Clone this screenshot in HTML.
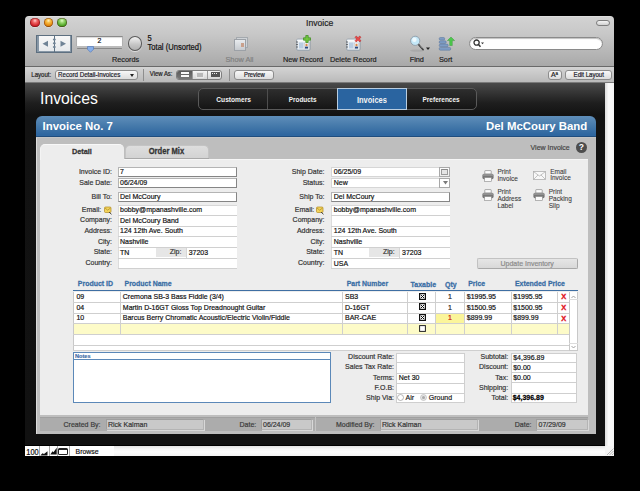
<!DOCTYPE html>
<html><head><meta charset="utf-8">
<style>
*{margin:0;padding:0;box-sizing:border-box}
html,body{width:640px;height:491px;background:#000;overflow:hidden;font-family:"Liberation Sans",sans-serif;}
.a{position:absolute}
.t{position:absolute;white-space:nowrap;line-height:1;-webkit-text-stroke:0.18px currentColor}
.t[style*="bold"]{-webkit-text-stroke:0.25px currentColor}
.t[style*="#fff"]{-webkit-text-stroke:0}
.t{transform:scaleY(1.1);transform-origin:0 85%}
#tb{position:absolute;left:25.4px;top:16px;width:588.8px;height:51px;background:linear-gradient(#e4e4e4 0,#d2d2d2 1.5px,#c8c8c8 35%,#a9a9a9);border-bottom:1px solid #6a6a6a;border-radius:4px 4px 0 0}
#lb{position:absolute;left:25.4px;top:67px;width:588.8px;height:16px;background:linear-gradient(#d4d4d4,#bababa);border-bottom:1px solid #7a7a7a}
#content{position:absolute;left:25.4px;top:83px;width:579.6px;height:362px;background:linear-gradient(#4a4a4a 0px,#1e1e1e 20px,#121212 32px,#111)}
#vscroll{position:absolute;left:605px;top:83px;width:9.3px;height:363px;background:linear-gradient(90deg,#dcdcdc,#fafafa 40%,#f4f4f4)}
#status{position:absolute;left:26px;top:445px;width:588px;height:11px;background:linear-gradient(90deg,#fff 0,#fff 400px,#f6f6f6)}
.tl{position:absolute;width:9.5px;height:9.5px;border-radius:50%;top:17.8px;box-shadow:inset 0 0 0 0.7px rgba(60,0,0,.45),0 0.5px 0.5px rgba(255,255,255,.6)}
.lbl{font-size:7.3px;color:#222}
</style></head><body>
<div id="tb"></div>
<!-- traffic lights -->
<div class="tl" style="left:30.3px;background:radial-gradient(circle at 50% 30%,#ffd0d0 0,#f06a6a 25%,#d2252c 60%,#8e1015 100%)"></div>
<div class="tl" style="left:43.8px;background:radial-gradient(circle at 50% 30%,#fff0c0 0,#f8c04a 25%,#e58a10 60%,#9a5a05 100%)"></div>
<div class="tl" style="left:57px;background:radial-gradient(circle at 50% 30%,#e0ffc8 0,#9ad870 25%,#52a82a 60%,#2a6a0c 100%)"></div>
<div class="t" style="left:306px;top:19px;font-size:8.6px;color:#222">Invoice</div>
<div class="a" style="left:596px;top:19.5px;width:14px;height:6.5px;border-radius:4px;border:1px solid #7d7d7d;background:linear-gradient(#f4f4f4,#d0d0d0)"></div>


<!-- book icon -->
<div class="a" style="left:36px;top:35px;width:36px;height:17.5px;background:#8797a6;border:0.8px solid #5d6f80"></div>
<div class="a" style="left:38.5px;top:36.2px;width:15px;height:15px;background:linear-gradient(#f8f8f8,#e6e9ec)"></div>
<div class="a" style="left:55px;top:36.2px;width:14.5px;height:15px;background:linear-gradient(#f8f8f8,#e6e9ec)"></div>
<div class="a" style="left:53.5px;top:35px;width:1.5px;height:17.5px;background:#5f7283"></div>
<svg class="a" style="left:36px;top:35px" width="36" height="17" viewBox="0 0 36 17">
<path d="M6.5 8.8 L12 5.8 L12 11.8 Z" fill="#6f8396"/>
<path d="M30 8.8 L24.5 5.8 L24.5 11.8 Z" fill="#6f8396"/>
<ellipse cx="18.3" cy="4.6" rx="1.5" ry="1.1" fill="#6f8396"/>
<ellipse cx="18.3" cy="8.3" rx="1.5" ry="1.1" fill="#6f8396"/>
<ellipse cx="18.3" cy="12" rx="1.5" ry="1.1" fill="#6f8396"/>
</svg>
<!-- record field -->
<div class="a" style="left:76px;top:35.5px;width:46.5px;height:10.5px;background:#fff;border-top:1px solid #8a8a8a;border-left:1px solid #b0b0b0;border-right:1px solid #b0b0b0;box-shadow:inset 0 1px 1px rgba(0,0,0,.15)"></div>
<div class="t" style="left:97.6px;top:38.1px;font-size:6.9px;color:#111">2</div>
<div class="a" style="left:76.5px;top:47.6px;width:45.5px;height:1.6px;background:linear-gradient(#6a6a6a,#a8a8a8);border-radius:1px"></div>
<svg class="a" style="left:86.8px;top:46.3px" width="7" height="7" viewBox="0 0 7 7"><path d="M0.5 0.5 H6.5 V3.3 L3.5 6.3 L0.5 3.3 Z" fill="#86aee8" stroke="#5a7db8" stroke-width="0.7"/></svg>
<div class="t lbl" style="left:112px;top:55.5px">Records</div>
<!-- pie -->
<div class="a" style="left:127.6px;top:36px;width:14.5px;height:14.7px;border-radius:50%;background:linear-gradient(#f2f2f2,#c4c4c4 60%,#b0b0b0);border:1px solid #5a5a5a;box-shadow:0 1px 1px rgba(255,255,255,.6)"></div>
<div class="t" style="left:147.5px;top:35.3px;font-size:7.5px;color:#111">5</div>
<div class="t" style="left:147.5px;top:43.6px;font-size:7.6px;color:#111">Total (Unsorted)</div>
<!-- show all icon -->
<div class="a" style="left:236px;top:36.5px;width:12px;height:11px;background:#cfd3d7;border:1px solid #a4a9ae"></div>
<div class="a" style="left:234px;top:38.5px;width:12px;height:12px;background:linear-gradient(#e8ebee,#c6cacf);border:1px solid #9ca1a7"></div>
<div class="a" style="left:240.5px;top:42.5px;width:3px;height:4px;background:#c9a08c"></div>
<div class="t lbl" style="left:225.5px;top:55.5px;color:#808080">Show All</div>
<!-- new record icon -->
<svg class="a" style="left:295.5px;top:38px" width="15" height="13" viewBox="0 0 15 13">
<rect x="0.8" y="1.2" width="13.2" height="11" rx="1" fill="#e9eef3" stroke="#8090a0" stroke-width="0.8"/>
<rect x="1.2" y="1.6" width="12.4" height="2" fill="#f8fafc"/>
<path d="M0 4 H2 M0 6.5 H2 M0 9 H2" stroke="#555" stroke-width="0.8"/>
<rect x="3" y="4.5" width="4.5" height="6" fill="#b9cde3"/>
<rect x="8.5" y="5" width="4" height="5.5" fill="#fff" stroke="#aab" stroke-width="0.4"/>
<circle cx="10.5" cy="7" r="1.2" fill="#d98c50"/>
<rect x="9" y="8.6" width="3" height="1.9" fill="#2a4a80"/>
</svg>
<svg class="a" style="left:303px;top:35px" width="8" height="8" viewBox="0 0 8 8"><path d="M2.8 0.5 H5.2 V2.8 H7.5 V5.2 H5.2 V7.5 H2.8 V5.2 H0.5 V2.8 H2.8 Z" fill="#72c640" stroke="#3b8a1e" stroke-width="0.7"/></svg>
<div class="t lbl" style="left:283px;top:55.5px">New Record</div>
<!-- delete record icon -->
<svg class="a" style="left:345.5px;top:38px" width="15" height="13" viewBox="0 0 15 13">
<rect x="0.8" y="1.2" width="13.2" height="11" rx="1" fill="#e9eef3" stroke="#8090a0" stroke-width="0.8"/>
<rect x="1.2" y="1.6" width="12.4" height="2" fill="#f8fafc"/>
<path d="M0 4 H2 M0 6.5 H2 M0 9 H2" stroke="#555" stroke-width="0.8"/>
<rect x="3" y="4.5" width="4.5" height="6" fill="#b9cde3"/>
<rect x="8.5" y="5" width="4" height="5.5" fill="#fff" stroke="#aab" stroke-width="0.4"/>
<circle cx="10.5" cy="7" r="1.2" fill="#d98c50"/>
<rect x="9" y="8.6" width="3" height="1.9" fill="#2a4a80"/>
</svg>
<svg class="a" style="left:353.5px;top:35px" width="8" height="8" viewBox="0 0 8 8"><path d="M1 2.3 L2.3 1 L4 2.7 L5.7 1 L7 2.3 L5.3 4 L7 5.7 L5.7 7 L4 5.3 L2.3 7 L1 5.7 L2.7 4 Z" fill="#e84a4a" stroke="#b02020" stroke-width="0.5"/></svg>
<div class="t lbl" style="left:330px;top:55.5px">Delete Record</div>
<!-- find -->
<svg class="a" style="left:409px;top:35px" width="22" height="18" viewBox="0 0 22 18">
<ellipse cx="8" cy="15.6" rx="7" ry="1.2" fill="rgba(0,0,0,.08)"/>
<line x1="9.8" y1="9.8" x2="14" y2="14.5" stroke="#3a3a3a" stroke-width="1.7" stroke-linecap="round"/>
<line x1="10.8" y1="10.2" x2="13.5" y2="13.3" stroke="#ddd" stroke-width="0.5"/>
<circle cx="6.2" cy="5.8" r="4.6" fill="#c4e8f8" stroke="#8e9ca8" stroke-width="0.9"/>
<circle cx="5.4" cy="4.8" r="2.2" fill="#eef9fe"/>
<path d="M17 12.5 H21 L19 15 Z" fill="#222"/>
</svg>
<div class="t lbl" style="left:409.7px;top:55.5px">Find</div>
<!-- sort -->
<svg class="a" style="left:438px;top:36px" width="18" height="16" viewBox="0 0 18 16">
<rect x="1.2" y="1.5" width="5.5" height="2.6" rx="1.2" fill="#7e9cc4" stroke="#56739a" stroke-width="0.5"/>
<rect x="1.2" y="4.8" width="7" height="2.6" rx="1.2" fill="#7e9cc4" stroke="#56739a" stroke-width="0.5"/>
<rect x="1.2" y="8.1" width="9" height="2.6" rx="1.2" fill="#7e9cc4" stroke="#56739a" stroke-width="0.5"/>
<rect x="1.2" y="11.4" width="11.5" height="2.8" rx="1.2" fill="#7e9cc4" stroke="#56739a" stroke-width="0.5"/>
<path d="M13 1 L16.6 4.6 H14.3 V9.5 H11.7 V4.6 H9.4 Z" fill="#4cc84c" stroke="#2f8f2f" stroke-width="0.4"/>
</svg>
<div class="t lbl" style="left:439px;top:55.5px">Sort</div>
<!-- search -->
<div class="a" style="left:468.5px;top:36.5px;width:134.5px;height:13.5px;border-radius:7px;background:#fff;border:1px solid #8a8a8a;box-shadow:inset 0 1px 1px rgba(0,0,0,.25)"></div>
<svg class="a" style="left:473px;top:39px" width="12" height="9" viewBox="0 0 12 9"><circle cx="3.6" cy="3.6" r="2.6" fill="none" stroke="#333" stroke-width="1.3"/><line x1="5.5" y1="5.5" x2="7.5" y2="7.8" stroke="#333" stroke-width="1.5"/><path d="M8 3.5 H11 L9.5 5.2 Z" fill="#333"/></svg>

<div id="lb"></div>

<div class="t lbl" style="left:31.3px;top:72.4px;font-size:6.05px">Layout:</div>
<div class="a" style="left:54.5px;top:69.5px;width:83px;height:10.5px;border-radius:3px;border:1px solid #8c8c8c;background:linear-gradient(#f8f8f8,#dcdcdc)"></div>
<div class="t lbl" style="left:58px;top:72.3px;font-size:6.2px;color:#1a1a2a">Record Detail-Invoices</div>
<svg class="a" style="left:130px;top:73.5px" width="4" height="3" viewBox="0 0 4 3"><path d="M0 0 H4 L2 3Z" fill="#222"/></svg>
<div class="a" style="left:143px;top:68.5px;width:1px;height:12px;background:#8e8e8e"></div>
<div class="t lbl" style="left:149.8px;top:72.4px;font-size:5.95px">View As:</div>
<div class="a" style="left:175.5px;top:69.7px;width:46.5px;height:10px;border-radius:3px;border:1px solid #7e7e7e;background:linear-gradient(#f6f6f6,#d6d6d6);overflow:hidden">
  <div class="a" style="left:0;top:0;width:15px;height:8px;background:linear-gradient(#5a5a5a,#7a7a7a)"></div>
  <div class="a" style="left:4px;top:1.4px;width:8px;height:2.2px;background:#fafafa"></div>
  <div class="a" style="left:4px;top:4.6px;width:8px;height:2.2px;background:#fafafa"></div>
  <div class="a" style="left:15px;top:0;width:0.8px;height:8px;background:#9a9a9a"></div>
  <div class="a" style="left:19px;top:1.3px;width:8.5px;height:6px;background:#b8b8b8;border:0.6px solid #e8e8e8"></div>
  <div class="a" style="left:30.5px;top:0;width:0.8px;height:8px;background:#9a9a9a"></div>
  <div class="a" style="left:34.5px;top:1.3px;width:9px;height:5.5px;background:repeating-linear-gradient(90deg,transparent 0 0.8px,#555 0.8px 2.2px),repeating-linear-gradient(transparent 0 0.9px,#555 0.9px 2.6px),#f0f0f0;border:0.8px solid #555"></div>
</div>
<div class="a" style="left:228.6px;top:68.5px;width:1px;height:12px;background:#8e8e8e"></div>
<div class="a" style="left:234px;top:69.5px;width:40px;height:10.5px;border-radius:3px;border:1px solid #8c8c8c;background:linear-gradient(#f8f8f8,#dcdcdc)"></div>
<div class="t lbl" style="left:244px;top:72.8px;font-size:5.85px;color:#1a1a2a">Preview</div>
<div class="a" style="left:548px;top:69.5px;width:13.5px;height:10px;border-radius:3px;border:1px solid #8c8c8c;background:linear-gradient(#f8f8f8,#dcdcdc)"></div>
<div class="t" style="left:551px;top:71.3px;font-size:7px;color:#222;letter-spacing:-0.3px">A<span style="font-size:4.5px;vertical-align:1.5px">a</span></div>
<div class="a" style="left:565px;top:69.5px;width:47px;height:10.5px;border-radius:3px;border:1px solid #8c8c8c;background:linear-gradient(#f8f8f8,#dcdcdc)"></div>
<div class="t lbl" style="left:573.6px;top:72.3px;font-size:6.05px;color:#1a1a2a">Edit Layout</div>

<div id="content"></div>
<div id="vscroll"></div>

<div class="t" style="left:40.4px;top:91.3px;font-size:16.8px;color:#fff;-webkit-text-stroke:0;transform:scaleX(0.94);transform-origin:0 0">Invoices</div>
<div class="a" style="left:198px;top:88px;width:278.5px;height:22px;border-radius:5px;border:1px solid #5a5a5a;background:linear-gradient(#2e2e2e,#151515)"></div>
<div class="a" style="left:267px;top:89px;width:1px;height:20px;background:#4e4e4e"></div>
<div class="a" style="left:337px;top:88px;width:69.5px;height:22px;background:#2a64a0;border:1px solid #b9cde0"></div>
<div class="t" style="left:216.3px;top:96.8px;font-size:6.65px;font-weight:bold;color:#f4f4f4;-webkit-text-stroke:0">Customers</div>
<div class="t" style="left:288.8px;top:96.8px;font-size:6.4px;font-weight:bold;color:#f4f4f4;-webkit-text-stroke:0">Products</div>
<div class="t" style="left:356.9px;top:96.8px;font-size:7.5px;font-weight:bold;color:#f4f4f4;-webkit-text-stroke:0">Invoices</div>
<div class="t" style="left:422.5px;top:96.8px;font-size:6.5px;font-weight:bold;color:#f4f4f4;-webkit-text-stroke:0">Preferences</div>
<!-- blue header -->
<div class="a" style="left:35.75px;top:116px;width:560.5px;height:21px;border-radius:6px 6px 0 0;background:linear-gradient(#5f8eba,#4579aa 50%,#2f67a0 92%);border-bottom:1px solid #1f4d7e"></div>
<div class="t" style="left:42.6px;top:121.2px;font-size:11.4px;font-weight:bold;color:#fff;transform:none">Invoice No. 7</div>
<div class="t" style="left:486px;top:121.2px;font-size:11.4px;font-weight:bold;color:#fff;transform:none">Del McCoury Band</div>
<!-- gray panel -->
<div class="a" style="left:35.5px;top:137px;width:560.5px;height:297px;background:#bebebe;border-left:1px solid #dcdcdc;border-top:1px solid #c6c6c6"></div>
<div class="a" style="left:124.60px;top:144.70px;width:84.40px;height:14.30px;background:linear-gradient(#dedede,#d2d2d2);border:1px solid #c4c4c4;border-bottom:none;border-radius:5px 5px 0 0"></div>
<div class="a" style="left:40.00px;top:158.50px;width:548.00px;height:256.00px;background:#ededed;border-top:1px solid #f6f6f6"></div>
<div class="a" style="left:124.60px;top:158.00px;width:84.40px;height:1.00px;background:#a9a9a9"></div>
<div class="a" style="left:40.00px;top:144.00px;width:84.00px;height:15.50px;background:#ededed;border-radius:5px 5px 0 0;border-top:1px solid #f8f8f8;border-left:1px solid #f4f4f4"></div>
<div class="t" style="left:71.90px;top:147.68px;font-size:7.35px;color:#333;font-weight:bold;">Detail</div>
<div class="t" style="left:148.70px;top:147.77px;font-size:7.6px;color:#333;font-weight:bold;">Order Mix</div>
<div class="t" style="right:70.25px;top:143.82px;font-size:7.0px;color:#444;">View Invoice</div>
<div class="a" style="left:575.6px;top:142px;width:11.3px;height:11.3px;border-radius:50%;background:#4d4d4d"></div>
<div class="t" style="left:531.30px;width:100px;text-align:center;top:143.40px;font-size:8.5px;color:#fff;font-weight:bold;">?</div>
<div class="t" style="right:528.00px;top:167.57px;font-size:7.0px;color:#333;">Invoice ID:</div>
<div class="t" style="right:528.00px;top:179.07px;font-size:7.0px;color:#333;">Sale Date:</div>
<div class="t" style="right:528.00px;top:193.37px;font-size:7.0px;color:#333;">Bill To:</div>
<div class="t" style="right:538.75px;top:205.57px;font-size:7.0px;color:#333;">Email:</div>
<div class="t" style="right:528.00px;top:216.07px;font-size:7.0px;color:#333;">Company:</div>
<div class="t" style="right:528.00px;top:226.67px;font-size:7.0px;color:#333;">Address:</div>
<div class="t" style="right:528.00px;top:237.67px;font-size:7.0px;color:#333;">City:</div>
<div class="t" style="right:528.00px;top:248.47px;font-size:7.0px;color:#333;">State:</div>
<div class="t" style="right:528.00px;top:259.07px;font-size:7.0px;color:#333;">Country:</div>
<svg class="a" style="left:103.5px;top:205.5px" width="9" height="9" viewBox="0 0 9 9"><rect x="0.5" y="1" width="6.5" height="5.5" rx="1" fill="#f3d35a" stroke="#b08a20" stroke-width="0.7"/><path d="M1 2 L3.7 4.2 L6.5 2" fill="none" stroke="#9a7a20" stroke-width="0.6"/><path d="M5 6 L7.5 8.3" stroke="#444" stroke-width="1"/></svg>
<div class="a" style="left:118.00px;top:166.90px;width:119.00px;height:10.00px;background:#fff;border:1px solid #b4b4b4;border-right:1.5px solid #858585;border-bottom:1.5px solid #858585;"></div>
<div class="a" style="left:118.00px;top:178.00px;width:119.00px;height:10.00px;background:#fff;border:1px solid #b4b4b4;border-right:1.5px solid #858585;border-bottom:1.5px solid #858585;"></div>
<div class="a" style="left:118.00px;top:192.30px;width:119.00px;height:9.90px;background:#fff;border:1px solid #b4b4b4;border-right:1.5px solid #858585;border-bottom:1.5px solid #858585;"></div>
<div class="a" style="left:118.00px;top:205.30px;width:119.00px;height:63.40px;background:#fff;border-left:1px solid #dcdcdc;border-top:1px solid #d8d8d8"></div>
<div class="a" style="left:118.00px;top:214.80px;width:119.00px;height:1.00px;background:#d0d0d0"></div>
<div class="a" style="left:118.00px;top:225.50px;width:119.00px;height:1.00px;background:#d0d0d0"></div>
<div class="a" style="left:118.00px;top:236.10px;width:119.00px;height:1.00px;background:#d0d0d0"></div>
<div class="a" style="left:118.00px;top:246.80px;width:119.00px;height:1.00px;background:#d0d0d0"></div>
<div class="a" style="left:118.00px;top:257.50px;width:119.00px;height:1.00px;background:#d0d0d0"></div>
<div class="a" style="left:118.00px;top:268.20px;width:119.00px;height:1.00px;background:#d0d0d0"></div>
<div class="a" style="left:156.25px;top:247.80px;width:30.45px;height:9.70px;background:#e6e6e6"></div>
<div class="a" style="left:186.10px;top:247.50px;width:1.00px;height:10.50px;background:#d6d6d6"></div>
<div class="t" style="right:458.60px;top:248.47px;font-size:7.0px;color:#333;">Zip:</div>
<div class="t" style="left:120.00px;top:167.57px;font-size:7.0px;color:#111;">7</div>
<div class="t" style="left:120.00px;top:179.07px;font-size:7.0px;color:#111;">06/24/09</div>
<div class="t" style="left:120.00px;top:193.37px;font-size:7.0px;color:#111;">Del McCoury</div>
<div class="t" style="left:120.00px;top:206.27px;font-size:7.0px;color:#111;">bobby@mpanashville.com</div>
<div class="t" style="left:120.00px;top:216.67px;font-size:7.0px;color:#111;">Del McCoury Band</div>
<div class="t" style="left:120.00px;top:227.27px;font-size:7.0px;color:#111;">124 12th Ave. South</div>
<div class="t" style="left:120.00px;top:238.07px;font-size:7.0px;color:#111;">Nashville</div>
<div class="t" style="left:120.00px;top:248.87px;font-size:7.0px;color:#111;">TN</div>
<div class="t" style="left:188.70px;top:248.87px;font-size:7.0px;color:#111;">37203</div>
<div class="t" style="right:315.50px;top:167.57px;font-size:7.0px;color:#333;">Ship Date:</div>
<div class="t" style="right:315.50px;top:179.07px;font-size:7.0px;color:#333;">Status:</div>
<div class="t" style="right:315.50px;top:193.37px;font-size:7.0px;color:#333;">Ship To:</div>
<div class="t" style="right:325.75px;top:205.57px;font-size:7.0px;color:#333;">Email:</div>
<div class="t" style="right:315.50px;top:216.07px;font-size:7.0px;color:#333;">Company:</div>
<div class="t" style="right:315.50px;top:226.67px;font-size:7.0px;color:#333;">Address:</div>
<div class="t" style="right:315.50px;top:237.67px;font-size:7.0px;color:#333;">City:</div>
<div class="t" style="right:315.50px;top:248.47px;font-size:7.0px;color:#333;">State:</div>
<div class="t" style="right:315.50px;top:259.07px;font-size:7.0px;color:#333;">Country:</div>
<svg class="a" style="left:316.0px;top:205.5px" width="9" height="9" viewBox="0 0 9 9"><rect x="0.5" y="1" width="6.5" height="5.5" rx="1" fill="#f3d35a" stroke="#b08a20" stroke-width="0.7"/><path d="M1 2 L3.7 4.2 L6.5 2" fill="none" stroke="#9a7a20" stroke-width="0.6"/><path d="M5 6 L7.5 8.3" stroke="#444" stroke-width="1"/></svg>
<div class="a" style="left:331.00px;top:166.90px;width:119.40px;height:10.00px;background:#fff;border:1px solid #d6d6d6;"></div>
<div class="a" style="left:331.00px;top:178.00px;width:119.40px;height:10.00px;background:#fff;border:1px solid #d6d6d6;"></div>
<div class="a" style="left:439.40px;top:167.10px;width:11.00px;height:9.50px;background:linear-gradient(#fdfdfd,#ececec);border:1px solid #a8a8a8;"></div>
<div class="a" style="left:441.40px;top:169.20px;width:7.00px;height:5.80px;background:#e4e4e4;border:0.8px solid #9a9a9a;border-top:1.6px solid #8a8a8a"></div>
<div class="a" style="left:439.40px;top:178.20px;width:11.00px;height:9.60px;background:#fff;border:1px solid #a8a8a8;"></div>
<svg class="a" style="left:442.6px;top:181.2px" width="5" height="4" viewBox="0 0 5 4"><path d="M0 0 H5 L2.5 3.6Z" fill="#7a7a7a"/></svg>
<div class="a" style="left:331.00px;top:192.30px;width:119.40px;height:9.90px;background:#fff;border:1px solid #b4b4b4;border-right:1.5px solid #858585;border-bottom:1.5px solid #858585;"></div>
<div class="a" style="left:331.00px;top:205.30px;width:119.40px;height:63.40px;background:#fff;border-left:1px solid #dcdcdc;border-top:1px solid #d8d8d8"></div>
<div class="a" style="left:331.00px;top:214.80px;width:119.40px;height:1.00px;background:#d0d0d0"></div>
<div class="a" style="left:331.00px;top:225.50px;width:119.40px;height:1.00px;background:#d0d0d0"></div>
<div class="a" style="left:331.00px;top:236.10px;width:119.40px;height:1.00px;background:#d0d0d0"></div>
<div class="a" style="left:331.00px;top:246.80px;width:119.40px;height:1.00px;background:#d0d0d0"></div>
<div class="a" style="left:331.00px;top:257.50px;width:119.40px;height:1.00px;background:#d0d0d0"></div>
<div class="a" style="left:331.00px;top:268.20px;width:119.40px;height:1.00px;background:#d0d0d0"></div>
<div class="a" style="left:369.00px;top:247.80px;width:31.00px;height:9.70px;background:#e6e6e6"></div>
<div class="a" style="left:399.40px;top:247.50px;width:1.00px;height:10.50px;background:#d6d6d6"></div>
<div class="t" style="right:245.30px;top:248.47px;font-size:7.0px;color:#333;">Zip:</div>
<div class="t" style="left:333.80px;top:167.57px;font-size:7.0px;color:#111;">06/25/09</div>
<div class="t" style="left:333.80px;top:179.07px;font-size:7.0px;color:#111;">New</div>
<div class="t" style="left:333.80px;top:193.37px;font-size:7.0px;color:#111;">Del McCoury</div>
<div class="t" style="left:333.80px;top:206.27px;font-size:7.0px;color:#111;">bobby@mpanashville.com</div>
<div class="t" style="left:333.80px;top:227.27px;font-size:7.0px;color:#111;">124 12th Ave. South</div>
<div class="t" style="left:333.80px;top:238.07px;font-size:7.0px;color:#111;">Nashville</div>
<div class="t" style="left:333.80px;top:248.87px;font-size:7.0px;color:#111;">TN</div>
<div class="t" style="left:333.80px;top:259.57px;font-size:7.0px;color:#111;">USA</div>
<div class="t" style="left:402.00px;top:248.87px;font-size:7.0px;color:#111;">37203</div>
<svg class="a" style="left:481.7px;top:169.8px" width="12" height="12" viewBox="0 0 12 12"><rect x="2.8" y="0.6" width="6.4" height="3.6" rx="0.5" fill="#fdfdfd" stroke="#8a8a8a" stroke-width="0.7"/><rect x="0.4" y="3.8" width="11.2" height="5.4" rx="1.6" fill="#777"/><rect x="0.8" y="4.2" width="10.4" height="1.6" rx="0.8" fill="#9a9a9a"/><rect x="2.6" y="7.6" width="6.8" height="3.8" fill="#fafafa" stroke="#8a8a8a" stroke-width="0.6"/></svg>
<svg class="a" style="left:481.7px;top:189.0px" width="12" height="12" viewBox="0 0 12 12"><rect x="2.8" y="0.6" width="6.4" height="3.6" rx="0.5" fill="#fdfdfd" stroke="#8a8a8a" stroke-width="0.7"/><rect x="0.4" y="3.8" width="11.2" height="5.4" rx="1.6" fill="#777"/><rect x="0.8" y="4.2" width="10.4" height="1.6" rx="0.8" fill="#9a9a9a"/><rect x="2.6" y="7.6" width="6.8" height="3.8" fill="#fafafa" stroke="#8a8a8a" stroke-width="0.6"/></svg>
<svg class="a" style="left:533.3px;top:189.0px" width="12" height="12" viewBox="0 0 12 12"><rect x="2.8" y="0.6" width="6.4" height="3.6" rx="0.5" fill="#fdfdfd" stroke="#8a8a8a" stroke-width="0.7"/><rect x="0.4" y="3.8" width="11.2" height="5.4" rx="1.6" fill="#777"/><rect x="0.8" y="4.2" width="10.4" height="1.6" rx="0.8" fill="#9a9a9a"/><rect x="2.6" y="7.6" width="6.8" height="3.8" fill="#fafafa" stroke="#8a8a8a" stroke-width="0.6"/></svg>
<svg class="a" style="left:533px;top:171px" width="13" height="9" viewBox="0 0 13 9"><rect x="0.5" y="0.5" width="12" height="8" fill="#f8f8f8" stroke="#b0b0b0" stroke-width="0.8"/><path d="M0.8 0.8 L6.5 5 L12.2 0.8 M0.8 8.2 L5 4 M12.2 8.2 L8 4" fill="none" stroke="#aaa" stroke-width="0.7"/></svg>
<div class="t" style="left:497.40px;top:168.80px;font-size:6.5px;color:#3a3a3a;-webkit-text-stroke:0.08px #3a3a3a">Print</div>
<div class="t" style="left:497.40px;top:175.80px;font-size:6.5px;color:#3a3a3a;-webkit-text-stroke:0.08px #3a3a3a">Invoice</div>
<div class="t" style="left:550.20px;top:169.10px;font-size:6.5px;color:#3a3a3a;-webkit-text-stroke:0.08px #3a3a3a">Email</div>
<div class="t" style="left:550.20px;top:175.40px;font-size:6.5px;color:#3a3a3a;-webkit-text-stroke:0.08px #3a3a3a">Invoice</div>
<div class="t" style="left:497.40px;top:188.80px;font-size:6.5px;color:#3a3a3a;-webkit-text-stroke:0.08px #3a3a3a">Print</div>
<div class="t" style="left:497.40px;top:195.80px;font-size:6.5px;color:#3a3a3a;-webkit-text-stroke:0.08px #3a3a3a">Address</div>
<div class="t" style="left:497.40px;top:202.80px;font-size:6.5px;color:#3a3a3a;-webkit-text-stroke:0.08px #3a3a3a">Label</div>
<div class="t" style="left:548.70px;top:188.80px;font-size:6.5px;color:#3a3a3a;-webkit-text-stroke:0.08px #3a3a3a">Print</div>
<div class="t" style="left:548.70px;top:195.80px;font-size:6.5px;color:#3a3a3a;-webkit-text-stroke:0.08px #3a3a3a">Packing</div>
<div class="t" style="left:548.70px;top:202.80px;font-size:6.5px;color:#3a3a3a;-webkit-text-stroke:0.08px #3a3a3a">Slip</div>
<div class="a" style="left:476.80px;top:257.80px;width:100.80px;height:11.00px;background:linear-gradient(#e6e6e6,#d8d8d8);border:1px solid #c2c2c2;border-right:1.5px solid #a8a8a8;border-bottom:1.5px solid #a8a8a8;border-radius:2px"></div>
<div class="t" style="left:477.20px;width:100px;text-align:center;top:259.57px;font-size:7.0px;color:#8a8a8a;">Update Inventory</div>
<div class="t" style="left:77.80px;top:281.01px;font-size:6.96px;color:#3a6ea5;font-weight:bold;">Product ID</div>
<div class="t" style="left:124.50px;top:281.01px;font-size:6.96px;color:#3a6ea5;font-weight:bold;">Product Name</div>
<div class="t" style="left:346.75px;top:281.06px;font-size:6.9px;color:#3a6ea5;font-weight:bold;">Part Number</div>
<div class="t" style="left:410.50px;top:280.97px;font-size:7.0px;color:#3a6ea5;font-weight:bold;">Taxable</div>
<div class="t" style="left:445.00px;top:280.97px;font-size:7.0px;color:#3a6ea5;font-weight:bold;">Qty</div>
<div class="t" style="left:468.25px;top:281.06px;font-size:6.9px;color:#3a6ea5;font-weight:bold;">Price</div>
<div class="t" style="left:515.00px;top:281.04px;font-size:6.92px;color:#3a6ea5;font-weight:bold;">Extended Price</div>
<div class="a" style="left:73.00px;top:290.10px;width:505.00px;height:1.40px;background:#3f6fa3"></div>
<div class="a" style="left:73.00px;top:291.60px;width:496.30px;height:59.00px;background:#fff;border-left:1px solid #c8c8c8"></div>
<div class="a" style="left:569.30px;top:291.60px;width:8.30px;height:59.00px;background:#fff;border-left:1px solid #c8c8c8;border-right:1px solid #c8c8c8;border-bottom:1px solid #c8c8c8"></div>
<div class="a" style="left:74.00px;top:323.60px;width:495.30px;height:10.60px;background:#fdfbc8"></div>
<div class="a" style="left:436.20px;top:313.60px;width:27.80px;height:9.20px;background:#fbf59a"></div>
<div class="a" style="left:73.00px;top:301.80px;width:496.30px;height:1.20px;background:#cfcfcf"></div>
<div class="a" style="left:73.00px;top:312.50px;width:496.30px;height:1.20px;background:#cfcfcf"></div>
<div class="a" style="left:73.00px;top:322.60px;width:496.30px;height:1.20px;background:#cfcfcf"></div>
<div class="a" style="left:73.00px;top:333.60px;width:496.30px;height:1.20px;background:#cfcfcf"></div>
<div class="a" style="left:73.00px;top:345.00px;width:496.30px;height:1.20px;background:#cfcfcf"></div>
<div class="a" style="left:73.00px;top:349.70px;width:496.30px;height:1.20px;background:#cfcfcf"></div>
<div class="a" style="left:119.80px;top:291.60px;width:1.00px;height:42.60px;background:#cfcfcf"></div>
<div class="a" style="left:342.00px;top:291.60px;width:1.00px;height:42.60px;background:#cfcfcf"></div>
<div class="a" style="left:407.25px;top:291.60px;width:1.00px;height:42.60px;background:#cfcfcf"></div>
<div class="a" style="left:435.10px;top:291.60px;width:1.00px;height:42.60px;background:#cfcfcf"></div>
<div class="a" style="left:463.90px;top:291.60px;width:1.00px;height:42.60px;background:#cfcfcf"></div>
<div class="a" style="left:510.70px;top:291.60px;width:1.00px;height:42.60px;background:#cfcfcf"></div>
<div class="a" style="left:557.00px;top:291.60px;width:1.00px;height:42.60px;background:#cfcfcf"></div>
<div class="a" style="left:569.30px;top:298.80px;width:8.30px;height:0.80px;background:#dcdcdc"></div>
<div class="a" style="left:569.30px;top:343.20px;width:8.30px;height:0.80px;background:#dcdcdc"></div>
<svg class="a" style="left:571.3px;top:294.8px" width="5" height="4" viewBox="0 0 5 4"><path d="M0.5 3 L2.5 1 L4.5 3" fill="none" stroke="#999" stroke-width="0.9"/></svg>
<svg class="a" style="left:571.3px;top:345.2px" width="5" height="4" viewBox="0 0 5 4"><path d="M0.5 1 L2.5 3 L4.5 1" fill="none" stroke="#999" stroke-width="0.9"/></svg>
<div class="t" style="left:76.40px;top:293.27px;font-size:7.0px;color:#111;">09</div>
<div class="t" style="left:122.80px;top:293.27px;font-size:7.0px;color:#111;">Cremona SB-3 Bass Fiddle (3/4)</div>
<div class="t" style="left:345.00px;top:293.27px;font-size:7.0px;color:#111;">SB3</div>
<div class="t" style="left:466.75px;top:293.27px;font-size:7.0px;color:#111;">$1995.95</div>
<div class="t" style="left:513.25px;top:293.27px;font-size:7.0px;color:#111;">$1995.95</div>
<div class="t" style="right:188.10px;top:293.27px;font-size:7.0px;color:#222;">1</div>
<svg class="a" style="left:419.4px;top:292.8px" width="7" height="7" viewBox="0 0 7 7"><rect x="0.6" y="0.6" width="5.8" height="5.8" fill="#fff" stroke="#111" stroke-width="1.2"/><path d="M1.8 1.8 L5.2 5.2 M5.2 1.8 L1.8 5.2" stroke="#111" stroke-width="1"/></svg>
<div class="t" style="left:561.20px;top:293.34px;font-size:7.4px;color:#e0141e;font-weight:bold;-webkit-text-stroke:0.35px #e0141e;transform:none">X</div>
<div class="t" style="left:76.40px;top:303.67px;font-size:7.0px;color:#111;">04</div>
<div class="t" style="left:122.80px;top:303.67px;font-size:7.0px;color:#111;">Martin D-16GT Gloss Top Dreadnought Guitar</div>
<div class="t" style="left:345.00px;top:303.67px;font-size:7.0px;color:#111;">D-16GT</div>
<div class="t" style="left:466.75px;top:303.67px;font-size:7.0px;color:#111;">$1500.95</div>
<div class="t" style="left:513.25px;top:303.67px;font-size:7.0px;color:#111;">$1500.95</div>
<div class="t" style="right:188.10px;top:303.67px;font-size:7.0px;color:#222;">1</div>
<svg class="a" style="left:419.4px;top:303.2px" width="7" height="7" viewBox="0 0 7 7"><rect x="0.6" y="0.6" width="5.8" height="5.8" fill="#fff" stroke="#111" stroke-width="1.2"/><path d="M1.8 1.8 L5.2 5.2 M5.2 1.8 L1.8 5.2" stroke="#111" stroke-width="1"/></svg>
<div class="t" style="left:561.20px;top:303.74px;font-size:7.4px;color:#e0141e;font-weight:bold;-webkit-text-stroke:0.35px #e0141e;transform:none">X</div>
<div class="t" style="left:76.40px;top:314.47px;font-size:7.0px;color:#111;">10</div>
<div class="t" style="left:122.80px;top:314.47px;font-size:7.0px;color:#111;">Barcus Berry Chromatic Acoustic/Electric Violin/Fiddle</div>
<div class="t" style="left:345.00px;top:314.47px;font-size:7.0px;color:#111;">BAR-CAE</div>
<div class="t" style="left:466.75px;top:314.47px;font-size:7.0px;color:#111;">$899.99</div>
<div class="t" style="left:513.25px;top:314.47px;font-size:7.0px;color:#111;">$899.99</div>
<div class="t" style="right:188.10px;top:314.47px;font-size:7.0px;color:#cc1111;">1</div>
<svg class="a" style="left:419.4px;top:314.0px" width="7" height="7" viewBox="0 0 7 7"><rect x="0.6" y="0.6" width="5.8" height="5.8" fill="#fff" stroke="#111" stroke-width="1.2"/><path d="M1.8 1.8 L5.2 5.2 M5.2 1.8 L1.8 5.2" stroke="#111" stroke-width="1"/></svg>
<div class="t" style="left:561.20px;top:314.54px;font-size:7.4px;color:#e0141e;font-weight:bold;-webkit-text-stroke:0.35px #e0141e;transform:none">X</div>
<svg class="a" style="left:419.4px;top:325.3px" width="7" height="7" viewBox="0 0 7 7"><rect x="0.6" y="0.6" width="5.8" height="5.8" fill="#fff" stroke="#222" stroke-width="1"/></svg>
<div class="a" style="left:73.00px;top:351.90px;width:258.30px;height:51.30px;background:#fff;border:1px solid #5b88b8"></div>
<div class="a" style="left:73.00px;top:359.40px;width:258.30px;height:1.00px;background:#5b88b8"></div>
<div class="t" style="left:75.10px;top:353.14px;font-size:6.1px;color:#3a6aa5;font-weight:bold;transform:scaleX(0.92);transform-origin:0 0;-webkit-text-stroke:0.15px #3a6aa5">Notes</div>
<div class="a" style="left:396.25px;top:352.50px;width:68.25px;height:50.50px;background:#fff;border:1px solid #cfcfcf"></div>
<div class="a" style="left:396.25px;top:362.00px;width:68.25px;height:1.00px;background:#cfcfcf"></div>
<div class="a" style="left:396.25px;top:372.50px;width:68.25px;height:1.00px;background:#cfcfcf"></div>
<div class="a" style="left:396.25px;top:382.50px;width:68.25px;height:1.00px;background:#cfcfcf"></div>
<div class="a" style="left:396.25px;top:392.50px;width:68.25px;height:1.00px;background:#cfcfcf"></div>
<div class="t" style="right:246.00px;top:353.27px;font-size:7.0px;color:#333;">Discount Rate:</div>
<div class="t" style="right:246.00px;top:363.27px;font-size:7.0px;color:#333;">Sales Tax Rate:</div>
<div class="t" style="right:246.00px;top:373.77px;font-size:7.0px;color:#333;">Terms:</div>
<div class="t" style="right:246.00px;top:383.77px;font-size:7.0px;color:#333;">F.O.B:</div>
<div class="t" style="right:246.00px;top:393.77px;font-size:7.0px;color:#333;">Ship Via:</div>
<div class="t" style="left:398.80px;top:373.77px;font-size:7.0px;color:#111;">Net 30</div>
<svg class="a" style="left:397.3px;top:394.0px" width="7" height="7" viewBox="0 0 7 7"><circle cx="3.5" cy="3.5" r="3" fill="#fff" stroke="#999" stroke-width="0.7"/></svg>
<div class="t" style="left:405.60px;top:393.77px;font-size:7.0px;color:#222;">Air</div>
<svg class="a" style="left:420.3px;top:394.0px" width="7" height="7" viewBox="0 0 7 7"><circle cx="3.5" cy="3.5" r="3" fill="#e6e6e6" stroke="#bbb" stroke-width="0.7"/><circle cx="3.5" cy="3.5" r="1.5" fill="#aaa"/></svg>
<div class="t" style="left:428.80px;top:393.77px;font-size:7.0px;color:#222;">Ground</div>
<div class="a" style="left:510.80px;top:352.70px;width:66.70px;height:50.80px;background:#fff;border:1px solid #cfcfcf"></div>
<div class="a" style="left:510.80px;top:361.70px;width:66.70px;height:1.00px;background:#cfcfcf"></div>
<div class="a" style="left:510.80px;top:372.00px;width:66.70px;height:1.00px;background:#cfcfcf"></div>
<div class="a" style="left:510.80px;top:382.30px;width:66.70px;height:1.00px;background:#cfcfcf"></div>
<div class="a" style="left:510.80px;top:392.60px;width:66.70px;height:1.00px;background:#cfcfcf"></div>
<div class="t" style="right:131.80px;top:353.27px;font-size:7.0px;color:#333;">Subtotal:</div>
<div class="t" style="right:131.80px;top:363.47px;font-size:7.0px;color:#333;">Discount:</div>
<div class="t" style="right:131.80px;top:373.77px;font-size:7.0px;color:#333;">Tax:</div>
<div class="t" style="right:131.80px;top:384.07px;font-size:7.0px;color:#333;">Shipping:</div>
<div class="t" style="right:131.80px;top:394.37px;font-size:7.0px;color:#333;">Total:</div>
<div class="t" style="left:513.20px;top:353.57px;font-size:7.0px;color:#111;">$4,396.89</div>
<div class="t" style="left:513.20px;top:363.67px;font-size:7.0px;color:#111;">$0.00</div>
<div class="t" style="left:513.20px;top:373.87px;font-size:7.0px;color:#111;">$0.00</div>
<div class="t" style="left:512.70px;top:394.47px;font-size:7.0px;color:#000;font-weight:bold;">$4,396.89</div>
<div class="a" style="left:40.00px;top:416.80px;width:548.00px;height:14.00px;background:#acacac;border-top:1px solid #a0a0a0"></div>
<div class="a" style="left:314.60px;top:416.80px;width:1.00px;height:14.00px;background:#c4c4c4"></div>
<div class="a" style="left:105.50px;top:418.75px;width:98.25px;height:11.25px;background:#c9c9c9;border:1px solid #b4b4b4;border-top:1px solid #9e9e9e;border-left:1px solid #9e9e9e;box-shadow:1px 1px 0 #d8d8d8"></div>
<div class="a" style="left:260.50px;top:418.75px;width:51.50px;height:11.25px;background:#c9c9c9;border:1px solid #b4b4b4;border-top:1px solid #9e9e9e;border-left:1px solid #9e9e9e;box-shadow:1px 1px 0 #d8d8d8"></div>
<div class="a" style="left:379.50px;top:418.75px;width:98.50px;height:11.25px;background:#c9c9c9;border:1px solid #b4b4b4;border-top:1px solid #9e9e9e;border-left:1px solid #9e9e9e;box-shadow:1px 1px 0 #d8d8d8"></div>
<div class="a" style="left:536.00px;top:418.75px;width:51.50px;height:11.25px;background:#c9c9c9;border:1px solid #b4b4b4;border-top:1px solid #9e9e9e;border-left:1px solid #9e9e9e;box-shadow:1px 1px 0 #d8d8d8"></div>
<div class="t" style="right:539.50px;top:420.87px;font-size:7.0px;color:#3a3a3a;">Created By:</div>
<div class="t" style="right:383.75px;top:420.87px;font-size:7.0px;color:#3a3a3a;">Date:</div>
<div class="t" style="right:265.50px;top:420.87px;font-size:7.0px;color:#3a3a3a;">Modified By:</div>
<div class="t" style="right:108.50px;top:420.87px;font-size:7.0px;color:#3a3a3a;">Date:</div>
<div class="t" style="left:108.00px;top:420.87px;font-size:7.0px;color:#333;">Rick Kalman</div>
<div class="t" style="left:263.00px;top:420.87px;font-size:7.0px;color:#333;">06/24/09</div>
<div class="t" style="left:382.00px;top:420.87px;font-size:7.0px;color:#333;">Rick Kalman</div>
<div class="t" style="left:538.50px;top:420.87px;font-size:7.0px;color:#333;">07/29/09</div>
<div class="a" style="left:25.40px;top:446.00px;width:588.80px;height:10.00px;background:#fff"></div>
<div class="a" style="left:113.80px;top:446.00px;width:491.20px;height:10.00px;background:linear-gradient(#e2e2e2,#f6f6f6 30%,#fefefe 60%,#f4f4f4)"></div>
<div class="a" style="left:605.00px;top:446.00px;width:9.00px;height:10.00px;background:#f4f4f4"></div>
<svg class="a" style="left:606px;top:447px" width="8" height="9" viewBox="0 0 8 9"><path d="M7.5 1.5 L1 8 M7.5 4 L3.5 8 M7.5 6.5 L6 8" stroke="#999" stroke-width="0.7"/></svg>
<div class="t" style="left:26.30px;top:448.54px;font-size:7.4px;color:#111;">100</div>
<div class="a" style="left:39.20px;top:446.20px;width:0.80px;height:9.60px;background:#aaa"></div>
<div class="a" style="left:48.60px;top:446.20px;width:0.80px;height:9.60px;background:#aaa"></div>
<div class="a" style="left:56.60px;top:446.20px;width:0.80px;height:9.60px;background:#aaa"></div>
<div class="a" style="left:68.90px;top:446.20px;width:0.80px;height:9.60px;background:#aaa"></div>
<svg class="a" style="left:40.3px;top:448.5px" width="8" height="7" viewBox="0 0 8 7"><path d="M0.3 6.5 L2.5 4.2 L4 5 L7.5 2.2 V6.5 Z" fill="#111"/></svg>
<svg class="a" style="left:49.6px;top:447.3px" width="7" height="8" viewBox="0 0 7 8"><path d="M0.3 7.5 L2.5 4.3 L3.5 5.3 L6.7 0.8 V7.5 Z" fill="#111"/></svg>
<div class="a" style="left:58.40px;top:447.60px;width:9.40px;height:7.40px;background:#fff;border:1.3px solid #222;border-top:2.6px solid #222;border-radius:1.5px"></div>
<div class="t" style="left:75.60px;top:448.96px;font-size:6.9px;color:#111;">Browse</div>
</body></html>
